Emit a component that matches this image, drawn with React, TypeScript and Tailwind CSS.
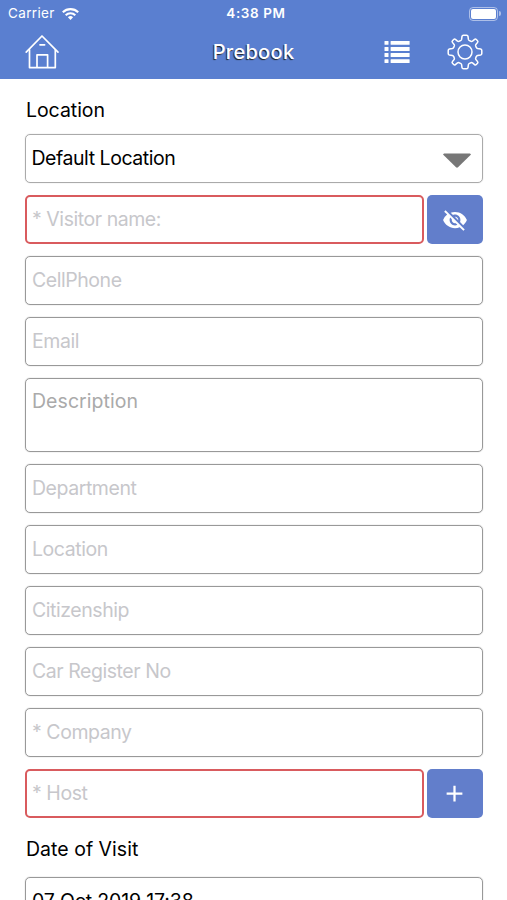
import React from 'react';
import clsx from 'clsx';
import { MdVisibilityOff, MdAdd } from 'react-icons/md';

const HomeIcon = () => (
  <svg className="h-[36px] w-[36px]" viewBox="0 0 36 36" fill="none" stroke="white" strokeWidth="1.7" strokeLinejoin="round" strokeLinecap="round">
    <path d="M2.2 18.2 L18 2 L34 18.2" />
    <path d="M5.5 15.8 V33.6 H31.3 V15.8" />
    <path d="M13 33 V20.8 H23.6 V33" />
    <path d="M16 10.8 H20.6" />
  </svg>
);

const ListIcon = () => (
  <svg className="h-[24px] w-[26px]" viewBox="0 0 26 24" fill="white">
    {[0.9, 7, 13.1, 19.2].map((y) => (
      <g key={y}>
        <rect x="0.5" y={y} width="4" height="3.9" rx="0.5" />
        <rect x="6.6" y={y} width="19" height="3.9" rx="0.5" />
      </g>
    ))}
  </svg>
);

const GearIcon = () => (
  <svg className="h-[36px] w-[36px]" viewBox="0 0 36 36" fill="none" stroke="white" strokeWidth="1.5" strokeLinejoin="round">
    <circle cx="18" cy="18" r="7" />
    <path d="M16.4 1.2 H19.6 Q20.8 1.2 21 2.4 L21.4 5.4 Q21.6 6.3 22.4 6.6 L24 7.3 Q24.8 7.6 25.5 7.1 L27.6 5.4 Q28.5 4.7 29.3 5.5 L30.5 6.7 Q31.3 7.5 30.6 8.4 L28.9 10.5 Q28.4 11.2 28.7 12 L29.4 13.6 Q29.7 14.4 30.6 14.6 L33.6 15 Q34.8 15.2 34.8 16.4 V19.6 Q34.8 20.8 33.6 21 L30.6 21.4 Q29.7 21.6 29.4 22.4 L28.7 24 Q28.4 24.8 28.9 25.5 L30.6 27.6 Q31.3 28.5 30.5 29.3 L29.3 30.5 Q28.5 31.3 27.6 30.6 L25.5 28.9 Q24.8 28.4 24 28.7 L22.4 29.4 Q21.6 29.7 21.4 30.6 L21 33.6 Q20.8 34.8 19.6 34.8 H16.4 Q15.2 34.8 15 33.6 L14.6 30.6 Q14.4 29.7 13.6 29.4 L12 28.7 Q11.2 28.4 10.5 28.9 L8.4 30.6 Q7.5 31.3 6.7 30.5 L5.5 29.3 Q4.7 28.5 5.4 27.6 L7.1 25.5 Q7.6 24.8 7.3 24 L6.6 22.4 Q6.3 21.6 5.4 21.4 L2.4 21 Q1.2 20.8 1.2 19.6 V16.4 Q1.2 15.2 2.4 15 L5.4 14.6 Q6.3 14.4 6.6 13.6 L7.3 12 Q7.6 11.2 7.1 10.5 L5.4 8.4 Q4.7 7.5 5.5 6.7 L6.7 5.5 Q7.5 4.7 8.4 5.4 L10.5 7.1 Q11.2 7.6 12 7.3 L13.6 6.6 Q14.4 6.3 14.6 5.4 L15 2.4 Q15.2 1.2 16.4 1.2 Z" />
  </svg>
);

const WifiIcon = () => (
  <svg className="h-[12px] w-[17px]" viewBox="0 0 17 12" fill="none" stroke="white" strokeWidth="2.1">
    <path d="M0.8 4.3 A11 11 0 0 1 16.2 4.3" />
    <path d="M3.7 7.2 A6.8 6.8 0 0 1 13.3 7.2" />
    <path d="M8.5 12 L5.9 9.3 A3.7 3.7 0 0 1 11.1 9.3 Z" fill="white" stroke="none" />
  </svg>
);

const StatusBar = () => (
  <div className="grid h-[27px] grid-cols-3 items-center pl-2 pr-[6px] text-[13px] text-white">
    <div className="flex items-center gap-[7px]">
      <span className="text-[13.5px] tracking-[0.35px]">Carrier</span>
      <WifiIcon />
    </div>
    <span className="pl-[3px] text-center text-[13.5px] font-semibold tracking-[0.6px]">4:38 PM</span>
    <div className="flex items-center justify-end gap-px">
      <div className="h-[14px] w-[29px] rounded-[4px] border border-white/50 p-px">
        <div className="h-full w-full rounded-[2px] bg-white" />
      </div>
      <div className="h-[5px] w-[2px] rounded-r-full bg-white/50" />
    </div>
  </div>
);

const Field = ({ label, required = false }: { label: string; required?: boolean }) => (
  <div
    className={clsx(
      'flex h-[49px] flex-1 items-center rounded-[5px] pt-px tracking-[-0.45px] text-[#c7c7cb]',
      required ? 'border-2 border-[#d95b5e] px-[5px]' : 'border border-[#999999] px-[6px] shadow-[0_0_1px_#999999]'
    )}
  >
    {label}
  </div>
);

const Prebook = () => {
  return (
    <div className="h-[900px] w-[507px] overflow-hidden bg-white font-['Inter',sans-serif] text-[19.5px] text-black">
      <header className="h-[79px] bg-[#5a7fd0]">
        <StatusBar />
        <div className="grid h-[50px] grid-cols-3 items-center pl-6 pr-6">
          <HomeIcon />
          <h1 className="text-center text-[20px] font-medium tracking-[0.3px] text-white [text-shadow:-1px_1px_1px_#222]">Prebook</h1>
          <div className="flex items-center justify-end gap-[37px]">
            <ListIcon />
            <GearIcon />
          </div>
        </div>
      </header>

      <main className="pl-[25px] pr-[24.5px] pt-[16px]">
        <div className="h-[39px] pl-px leading-[31px] tracking-[-0.05px]">Location</div>
        <div className="flex flex-col gap-3">
          <div className="flex h-[49px] items-center justify-between rounded-[5px] border border-[#aaaaaa] pl-[5.5px] pr-[11px] shadow-[0_0_1px_#bbbbbb]">
            <span className="tracking-[-0.45px]">Default Location</span>
            <svg className="mt-[3px] h-[15px] w-[28px]" viewBox="0 0 28 15">
              <path d="M1 0.5 H27 L28 1.5 L15 14.3 Q14 15 13 14.3 L0 1.5 Z" fill="#777777" />
            </svg>
          </div>

          <div className="flex gap-[2.5px]">
            <Field label="* Visitor name:" required />
            <button className="flex h-[49px] w-[56px] items-center justify-center rounded-[5px] bg-[#627ecb]">
              <MdVisibilityOff className="h-[26px] w-[26px] text-white" />
            </button>
          </div>

          <div className="flex"><Field label="CellPhone" /></div>
          <div className="flex"><Field label="Email" /></div>
          <div className="h-[74px] rounded-[5px] border border-[#999999] px-[6px] pt-[8px] tracking-[0.05px] text-[#aaaaaa] shadow-[0_0_1px_#999999]">
            Description
          </div>

          {['Department', 'Location', 'Citizenship', 'Car Register No', '* Company'].map((label) => (
            <div key={label} className="flex"><Field label={label} /></div>
          ))}

          <div className="flex gap-[2.5px]">
            <Field label="* Host" required />
            <button className="flex h-[49px] w-[56px] items-center justify-center rounded-[5px] bg-[#627ecb]">
              <MdAdd className="h-[27px] w-[27px] text-white" />
            </button>
          </div>
        </div>

        <div className="h-[59px] pl-px pt-[16px] leading-[31px] tracking-[0.02px]">Date of Visit</div>
        <div className="flex h-[49px] items-center rounded-[5px] border border-[#999999] px-[6px] tracking-[-0.15px] shadow-[0_0_1px_#999999]">
          07 Oct 2019 17:38
        </div>
      </main>
    </div>
  );
};

export default Prebook;
